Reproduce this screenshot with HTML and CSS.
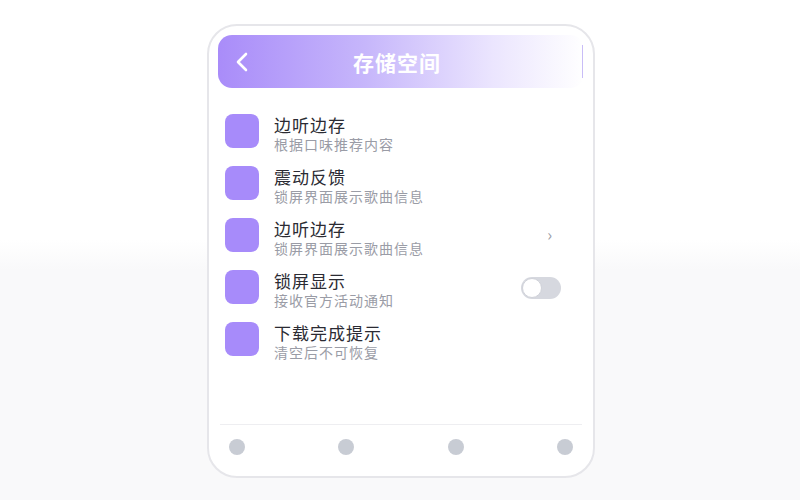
FILE: index.html
```html
<!DOCTYPE html>
<html lang="zh">
<head>
    <meta charset="UTF-8">
    <meta name="viewport" content="width=device-width, initial-scale=1.0">
    <title>存储空间</title>
    <link rel="stylesheet" href="styles.css">
</head>
<body>
    <div class="phone">
        <div class="header">
            <span class="back">
                <svg width="14" height="20" viewBox="0 0 14 20"><path d="M11 2 L3 10 L11 18" fill="none" stroke="#fff" stroke-width="2.6" stroke-linecap="round" stroke-linejoin="round"/></svg>
            </span>
            <h1>存储空间</h1>
        </div>
        <div class="list">
            <div class="row">
                <div class="icon"></div>
                <div class="text">
                    <div class="title">边听边存</div>
                    <div class="sub">根据口味推荐内容</div>
                </div>
            </div>
            <div class="row">
                <div class="icon"></div>
                <div class="text">
                    <div class="title">震动反馈</div>
                    <div class="sub">锁屏界面展示歌曲信息</div>
                </div>
            </div>
            <div class="row">
                <div class="icon"></div>
                <div class="text">
                    <div class="title">边听边存</div>
                    <div class="sub">锁屏界面展示歌曲信息</div>
                </div>
                <span class="arrow">›</span>
            </div>
            <div class="row">
                <div class="icon"></div>
                <div class="text">
                    <div class="title">锁屏显示</div>
                    <div class="sub">接收官方活动通知</div>
                </div>
                <span class="toggle"><span class="knob"></span></span>
            </div>
            <div class="row">
                <div class="icon"></div>
                <div class="text">
                    <div class="title">下载完成提示</div>
                    <div class="sub">清空后不可恢复</div>
                </div>
            </div>
        </div>
        <div class="tabs">
            <span class="dot"></span>
            <span class="dot"></span>
            <span class="dot"></span>
            <span class="dot"></span>
        </div>
    </div>
</body>
</html>
```

FILE: styles.css
```css
html, body { height: 100%; }
body {
    margin: 0;
    font-family: "Noto Sans CJK SC", "Noto Sans", sans-serif;
    background: linear-gradient(180deg, #ffffff 0%, #ffffff 48%, #f9f9fa 54%, #f9f9fa 100%);
}
.phone {
    box-sizing: border-box;
    width: 388px;
    height: 454px;
    margin: 24px 0 0 207px;
    border: 2px solid #e6e6ea;
    border-radius: 30px;
    background: #fff;
    padding: 9px 9px 0 9px;
    display: flex;
    flex-direction: column;
}
.header {
    position: relative;
    height: 53px;
    border-radius: 14px;
    background: linear-gradient(90deg, #a98cf9 0%, #c6b6fb 40%, #ebe5fe 75%, #ffffff 100%);
    display: flex;
    align-items: center;
    justify-content: center;
}
.header::after {
    content: "";
    position: absolute;
    right: 1px;
    top: 10px;
    width: 1px;
    height: 33px;
    background: #c9bdf7;
}
.back {
    position: absolute;
    left: 17px;
    top: 17px;
    display: flex;
}
.header h1 {
    margin: 0 8px 0 0;
    color: #fff;
    font-size: 21px;
    font-weight: 700;
    letter-spacing: 1px;
}
.list {
    flex: 1;
    padding: 26px 0 0 7px;
    display: flex;
    flex-direction: column;
    gap: 18px;
}
.row {
    display: flex;
    align-items: flex-start;
    height: 34px;
    padding-right: 20px;
}
.icon {
    width: 34px;
    height: 34px;
    border-radius: 8px;
    background: #a78bfa;
    flex-shrink: 0;
}
.text {
    flex: 1;
    margin-left: 15px;
    padding-top: 1px;
}
.title {
    font-size: 17px;
    line-height: 20px;
    color: #2b2b33;
    letter-spacing: 1px;
}
.sub {
    font-size: 14px;
    line-height: 18px;
    color: #9a9ca6;
    letter-spacing: 1px;
}
.arrow {
    color: #9a9ca6;
    font-size: 16px;
    line-height: 20px;
    margin: 6px 12px 0 0;
}
.toggle {
    width: 40px;
    height: 22px;
    border-radius: 11px;
    background: #d6d8df;
    position: relative;
    margin: 7px 3px 0 0;
}
.knob {
    position: absolute;
    left: 1px;
    top: 1px;
    width: 20px;
    height: 20px;
    box-sizing: border-box;
    border-radius: 50%;
    background: #fff;
    border: 1px solid #d0d2d9;
}
.tabs {
    border-top: 1px solid #eeeef1;
    margin: 0 2px;
    height: 52px;
    padding: 14px 9px 0 9px;
    box-sizing: border-box;
    display: flex;
    justify-content: space-between;
}
.dot {
    width: 16px;
    height: 16px;
    border-radius: 50%;
    background: #c8ccd4;
}
```
